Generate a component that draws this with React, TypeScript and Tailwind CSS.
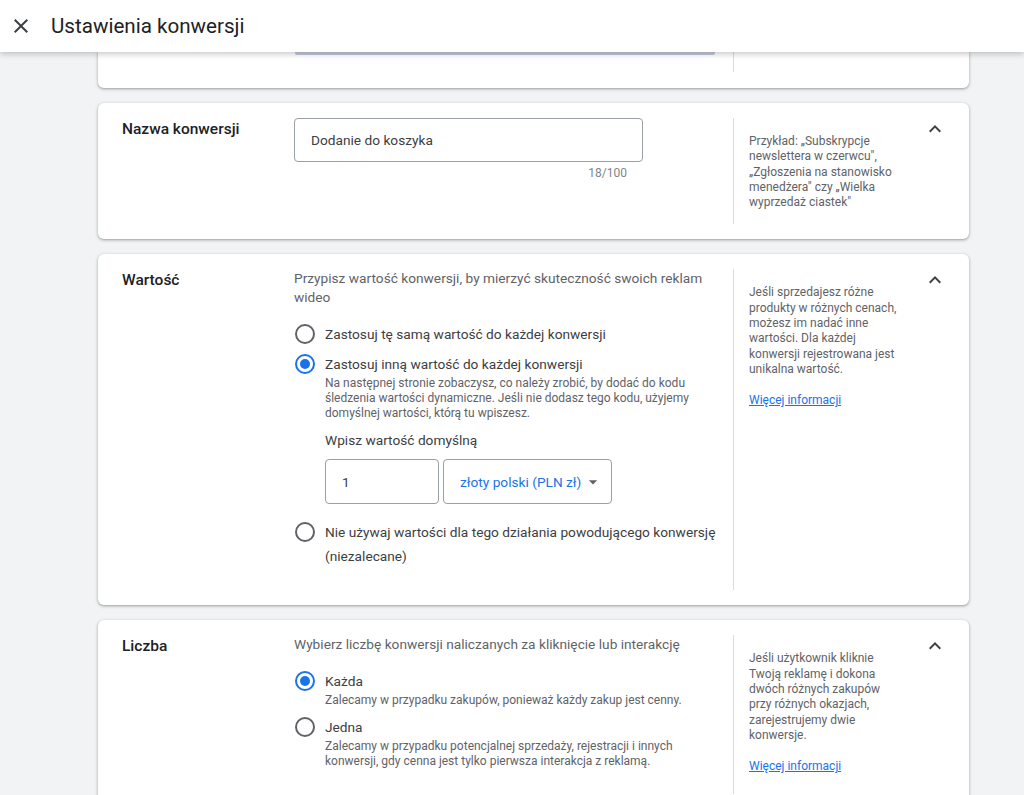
import React from "react";

const Chevron = () => (
  <svg width="24" height="24" viewBox="0 0 24 24">
    <path d="M12 8l-6 6 1.41 1.41L12 10.83l4.59 4.58L18 14z" fill="#3c4043" />
  </svg>
);

function Radio({ checked }: { checked?: boolean }) {
  return (
    <div className="h-6 flex items-center shrink-0 ml-px">
      {checked ? (
        <span className="w-5 h-5 rounded-full border-2 border-[#1a73e8] flex items-center justify-center">
          <span className="w-2.5 h-2.5 rounded-full bg-[#1a73e8]" />
        </span>
      ) : (
        <span className="w-5 h-5 rounded-full border-2 border-[#5f6368]" />
      )}
    </div>
  );
}

function Option({
  checked,
  label,
  sub,
  className = "",
  children,
}: {
  checked?: boolean;
  label: React.ReactNode;
  sub?: React.ReactNode;
  className?: string;
  children?: React.ReactNode;
}) {
  return (
    <div className={"flex gap-[10px] " + className}>
      <Radio checked={checked} />
      <div className="flex flex-col">
        <div className="text-[13.7px] leading-6 text-[#3c4043]">{label}</div>
        {sub && <div className="text-[12px] leading-[15px] text-[#5f6368]">{sub}</div>}
        {children}
      </div>
    </div>
  );
}

function Card({
  label,
  middle,
  right,
  middleClass = "",
}: {
  label: string;
  middle: React.ReactNode;
  right: React.ReactNode;
  middleClass?: string;
}) {
  return (
    <div className="w-[871px] bg-white rounded-[6px] shadow-[0_1px_2px_0_rgba(60,64,67,0.3),0_1px_3px_1px_rgba(60,64,67,0.15)] flex shrink-0">
      <div className="w-[196px] pl-6 pt-[16px] text-[15.5px] font-medium leading-5 text-[#202124]">{label}</div>
      <div className={"w-[421px] pt-[15px] " + middleClass}>{middle}</div>
      <div className="ml-[18px] my-[15px] border-l border-[#dadce0] pl-[15px] pt-4 pb-[14px] w-[166px] text-[12px] leading-[15.3px] text-[#5f6368]">
        {right}
      </div>
      <div className="pt-[14px] pl-6">
        <Chevron />
      </div>
    </div>
  );
}

const Link = () => (
  <div className="mt-[16px] text-[#1a73e8] underline">Więcej informacji</div>
);

export default function App() {
  return (
    <div className="w-[1024px] h-[795px] overflow-hidden flex flex-col bg-[#f1f3f4] font-[Roboto,sans-serif]">
      <header className="h-[52px] shrink-0 bg-white relative z-10 shadow-[0_2px_6px_rgba(0,0,0,0.22)] flex items-center">
        <div className="w-[24px] h-[24px] ml-[9px]">
          <svg width="24" height="24" viewBox="0 0 24 24">
            <path
              d="M19 6.41L17.59 5 12 10.59 6.41 5 5 6.41 10.59 12 5 17.59 6.41 19 12 13.41 17.59 19 19 17.59 13.41 12z"
              fill="#3c4043"
            />
          </svg>
        </div>
        <h1 className="ml-[18px] text-[20.6px] text-[#202124] font-normal">Ustawienia konwersji</h1>
      </header>

      <main className="flex-1 flex flex-col gap-[15px] pl-[98px]">
        {/* partial card scrolled under header */}
        <div className="w-[871px] h-[36px] shrink-0 bg-white rounded-b-[6px] shadow-[0_1px_2px_0_rgba(60,64,67,0.3),0_1px_3px_1px_rgba(60,64,67,0.15)] flex">
          <div className="w-[196px]" />
          <div className="w-[421px]">
            <div className="h-[3px] ml-px bg-[#c3c8da] rounded-b-[2px]" />
          </div>
          <div className="ml-[18px] h-[20px] border-l border-[#dadce0]" />
        </div>

        <Card
          label="Nazwa konwersji"
          middle={
            <div className="flex flex-col w-[349px]">
              <div className="h-[44px] border border-[#9aa0a6] rounded-[4px] px-4 flex items-center text-[13.7px] text-[#3c4043]">
                Dodanie do koszyka
              </div>
              <div className="mt-[3px] pr-4 text-right text-[12px] leading-4 text-[#80868b]">18/100</div>
            </div>
          }
          right={
            <div>
              Przykład: „Subskrypcje newslettera w czerwcu", „Zgłoszenia na stanowisko menedżera" czy „Wielka
              wyprzedaż ciastek"
            </div>
          }
        />

        <Card
          label="Wartość"
          middleClass="pb-[37px]"
          middle={
            <div className="flex flex-col">
              <div className="text-[13.7px] leading-[19px] text-[#5f6368]">
                Przypisz wartość konwersji, by mierzyć skuteczność swoich reklam wideo
              </div>
              <Option className="mt-[15px]" label="Zastosuj tę samą wartość do każdej konwersji" />
              <Option
                className="mt-[6px]"
                checked
                label="Zastosuj inną wartość do każdej konwersji"
                sub="Na następnej stronie zobaczysz, co należy zrobić, by dodać do kodu śledzenia wartości dynamiczne. Jeśli nie dodasz tego kodu, użyjemy domyślnej wartości, którą tu wpiszesz."
              >
                <div className="mt-[9px] text-[13.7px] leading-5 text-[#3c4043]">Wpisz wartość domyślną</div>
                <div className="mt-[9px] flex gap-1">
                  <div className="w-[114px] h-[45px] border border-[#9aa0a6] rounded-[4px] pl-4 flex items-center text-[13.7px] text-[#3c4043]">
                    1
                  </div>
                  <div className="w-[169px] h-[45px] border border-[#9aa0a6] rounded-[4px] pl-4 pr-[8px] flex items-center text-[13.7px] text-[#1a73e8]">
                    <span className="whitespace-nowrap">złoty polski (PLN zł)</span>
                    <svg className="ml-auto shrink-0" width="20" height="20" viewBox="0 0 24 24">
                      <path d="M7 10l5 5 5-5z" fill="#5f6368" />
                    </svg>
                  </div>
                </div>
              </Option>
              <Option
                className="mt-[16px]"
                label={
                  <>
                    <span className="whitespace-nowrap">Nie używaj wartości dla tego działania powodującego konwersję</span>
                    <br />
                    (niezalecane)
                  </>
                }
              />
            </div>
          }
          right={
            <div>
              <div>
                Jeśli sprzedajesz różne produkty w różnych cenach, możesz im nadać inne wartości. Dla każdej konwersji
                rejestrowana jest unikalna wartość.
              </div>
              <Link />
            </div>
          }
        />

        <Card
          label="Liczba"
          middleClass="pb-[40px]"
          middle={
            <div className="flex flex-col">
              <div className="text-[13.7px] leading-[19px] text-[#5f6368]">
                Wybierz liczbę konwersji naliczanych za kliknięcie lub interakcję
              </div>
              <Option
                className="mt-[15px]"
                checked
                label="Każda"
                sub="Zalecamy w przypadku zakupów, ponieważ każdy zakup jest cenny."
              />
              <Option
                className="mt-[7px]"
                label="Jedna"
                sub="Zalecamy w przypadku potencjalnej sprzedaży, rejestracji i innych konwersji, gdy cenna jest tylko pierwsza interakcja z reklamą."
              />
            </div>
          }
          right={
            <div>
              <div>
                Jeśli użytkownik kliknie Twoją reklamę i dokona dwóch różnych zakupów przy różnych okazjach,
                zarejestrujemy dwie konwersje.
              </div>
              <Link />
            </div>
          }
        />
      </main>
    </div>
  );
}
